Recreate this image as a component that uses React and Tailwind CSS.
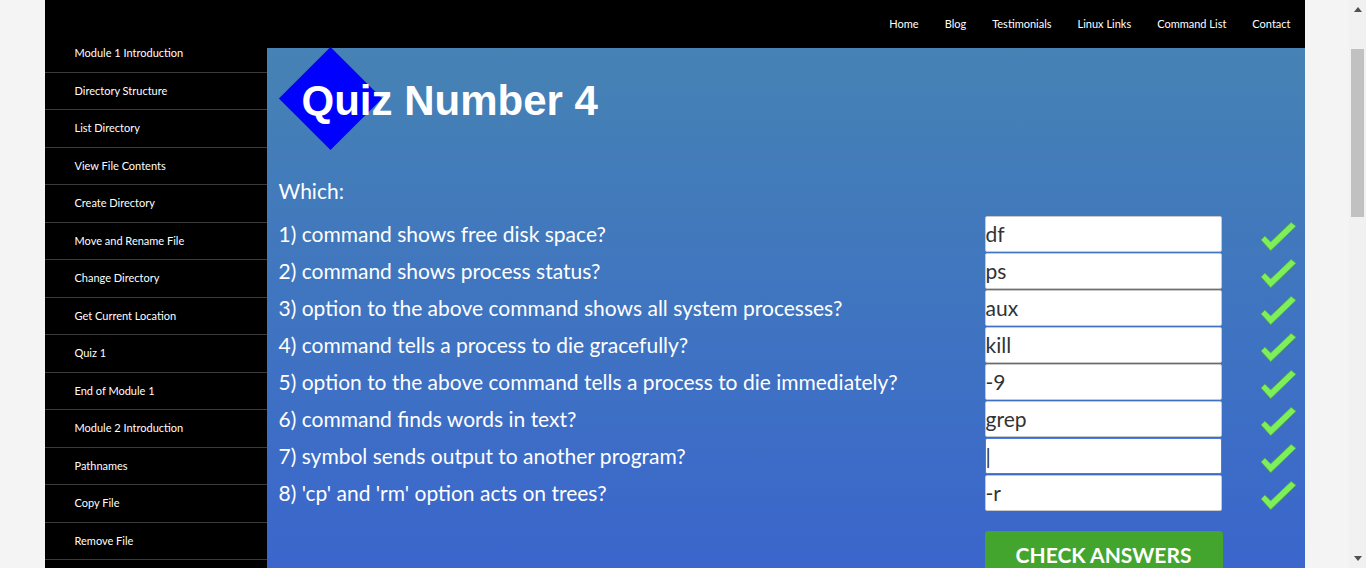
const menu = [
  "Module 1 Introduction",
  "Directory Structure",
  "List Directory",
  "View File Contents",
  "Create Directory",
  "Move and Rename File",
  "Change Directory",
  "Get Current Location",
  "Quiz 1",
  "End of Module 1",
  "Module 2 Introduction",
  "Pathnames",
  "Copy File",
  "Remove File",
];

const nav = ["Home", "Blog", "Testimonials", "Linux Links", "Command List", "Contact"];

const questions = [
  ["1) command shows free disk space?", "df"],
  ["2) command shows process status?", "ps"],
  ["3) option to the above command shows all system processes?", "aux"],
  ["4) command tells a process to die gracefully?", "kill"],
  ["5) option to the above command tells a process to die immediately?", "-9"],
  ["6) command finds words in text?", "grep"],
  ["7) symbol sends output to another program?", "|"],
  ["8) 'cp' and 'rm' option acts on trees?", "-r"],
];

const Check = () => (
  <svg width="39" height="32" viewBox="0 0 40 32">
    <path
      d="M2 20 L6 16 L12 22 L33 2 L38 6 L12 31 Z"
      fill="#7cf05a"
      stroke="#5aa040"
      strokeWidth="0.8"
      strokeLinejoin="round"
    />
  </svg>
);

// fake browser scrollbar
const Scrollbar = () => (
  <div className="flex w-[17px] shrink-0 flex-col items-center bg-[#f1f1f1]">
    <svg className="mt-[7px]" width="8" height="5" viewBox="0 0 8 5">
      <path d="M0 5 L4 0 L8 5 Z" fill="#505050" />
    </svg>
    <div className="mt-[37px] h-[168px] w-[13px] bg-[#c1c1c1]" />
    <div className="flex-1" />
    <svg className="mb-[7px]" width="8" height="5" viewBox="0 0 8 5">
      <path d="M0 0 L8 0 L4 5 Z" fill="#505050" />
    </svg>
  </div>
);

export default function App() {
  return (
    <div className="flex h-[568px] overflow-hidden bg-[#f4f4f4] font-['Lato','Open_Sans',sans-serif]">
      <div className="flex-1">
        <div className="mx-auto flex h-full w-[1260px]">
          <aside className="w-[222px] shrink-0 bg-black pt-[35px]">
            {menu.map((m) => (
              <div
                key={m}
                className="flex h-[37.5px] items-center border-b border-[#3a3a3a] pl-[30px] text-[11px] text-white"
              >
                {m}
              </div>
            ))}
          </aside>
          <div className="flex-1">
            <header className="flex h-[48px] items-center justify-end gap-[26px] bg-black pr-[14px] text-[11px] text-white">
              {nav.map((n) => (
                <span key={n}>{n}</span>
              ))}
            </header>
            <main className="h-[620px] bg-gradient-to-b from-[#4682b4] to-[#3a5fd0] pl-3">
              <div className="relative flex h-[102px] items-center">
                <div className="absolute left-[15px] top-[14px] h-[73px] w-[73px] rotate-45 bg-[#0000ff]" />
                <h1 className="relative ml-[23px] mt-[2px] font-['Liberation_Sans',Arial,sans-serif] text-[42px] font-bold text-white">
                  Quiz Number 4
                </h1>
              </div>
              <p className="mt-[29px] text-[21px] leading-[24px] text-white">Which:</p>
              <div className="mt-[12px]">
                {questions.map(([q, a], i) => (
                  <div key={q} className="flex h-[37px] items-center">
                    <span className="flex-1 text-[21px] text-white">{q}</span>
                    <div
                      className={`box-border flex h-[36px] w-[237px] items-center rounded-[2px] border bg-white text-[21px] text-[#333] ${
                        i === 6 ? "border-[#4a7be0]" : "border-[#c8c8c8]"
                      }`}
                    >
                      {a}
                    </div>
                    <div className="flex w-[83px] pl-[37px] pt-[4px]">
                      <Check />
                    </div>
                  </div>
                ))}
              </div>
              <div className="mt-[20px] flex">
                <div className="flex-1" />
                <button className="h-[48px] w-[238px] rounded-[3px] bg-[#43a52e] text-[21px] font-bold uppercase text-white">
                  Check Answers
                </button>
                <div className="w-[82px]" />
              </div>
            </main>
          </div>
        </div>
      </div>
      <Scrollbar />
    </div>
  );
}
